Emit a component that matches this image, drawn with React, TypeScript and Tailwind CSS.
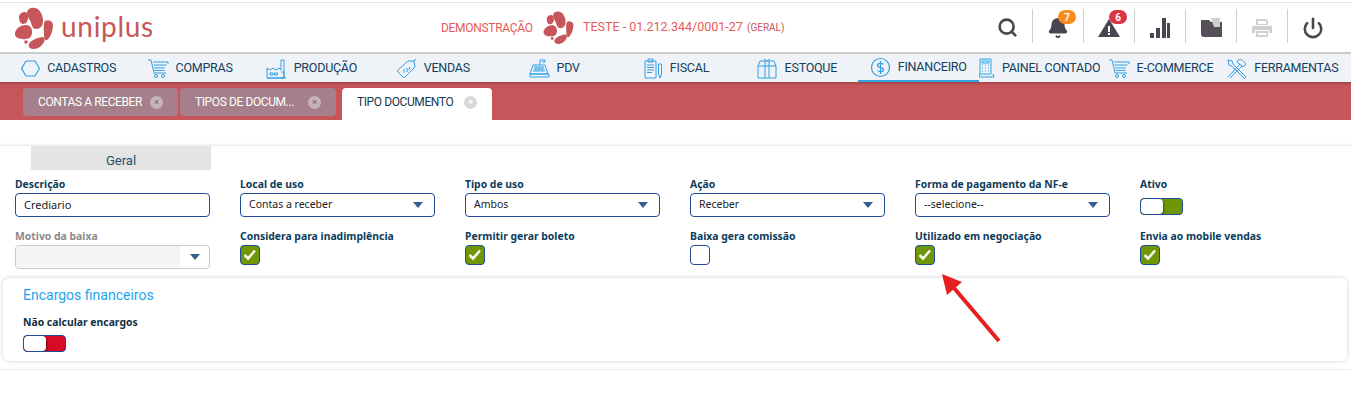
import React from 'react';
import { Search, Bell, Power } from 'lucide-react';

const baseFont = { fontFamily: '"Roboto", sans-serif' };

const Logo = ({ className = '' }: { className?: string }) => (
  <svg viewBox="0 0 38 42" className={className} fill="#c6565a">
    <path d="M12 6c0-4 4-6 8-5 5 1 8 7 8 13 0 5-3 8-7 8-3 0-4-3-5-6-1-4-4-6-4-10z" />
    <path d="M4 10c0-3 3-5 6-5 2 0 3 3 3 6 0 3-2 6-5 6-3 0-4-4-4-7z" />
    <path d="M0 26c1-5 6-8 11-8 4 0 6 3 6 7s-2 7-6 7c-5 1-12-1-11-6z" />
    <path d="M30 14c3-2 7 0 8 3 0 6-2 13-6 16-2 1-3-1-3-5 0-5-1-12 1-14z" />
    <path d="M14 37c2-4 8-6 13-7 3 0 3 3 2 5-2 4-6 7-10 7-4 0-6-2-5-5z" />
    <circle cx="11" cy="35" r="1.800" />
  </svg>
);

const Stroke = ({ children, w = 21, h = 21, vb = '0 0 21 21' }: { children: React.ReactNode; w?: number; h?: number; vb?: string }) => (
  <svg width={w} height={h} viewBox={vb} fill="none" stroke="#2f9fe6" strokeWidth="1" className="shrink-0">
    {children}
  </svg>
);

const icons: Record<string, React.ReactNode> = {
  hex: <Stroke w={19} h={17} vb="0 0 19 17"><path strokeWidth="1.200" d="M5 1h9l4.500 7.500L14 16H5L.6 8.500z" /></Stroke>,
  cart: (
    <Stroke>
      <path d="M0 2h3l3 13h12M5 4h15v2M5.500 7h13M6 10h11M6.500 12.500h10" />
      <circle cx="8" cy="18" r="1.500" />
      <circle cx="15" cy="18" r="1.500" />
    </Stroke>
  ),
  factory: (
    <Stroke>
      <path d="M1 20V10l3 2 3-2 3 2 3-2 2 2V2h3v18zM1 20h19" />
      <path d="M4 15h3v2H4zM8.500 15h3v2h-3zM15 14h3v6h-3" />
    </Stroke>
  ),
  tag: (
    <Stroke>
      <path d="M1 13 12 3h6l1 6L8 20z" />
      <path d="m17 4 3-3M8 11v4M11 10v4M14 9l-1 3" />
    </Stroke>
  ),
  pdv: (
    <Stroke>
      <path d="M1 16 4 7h12l3 9zM1 16h19v3H1zM11 7V2h5v2h-3" />
      <path d="M5 9h10M4.500 11h11M4 13h12M7 9v4M10 9v4M13 9v4" strokeWidth=".9" />
    </Stroke>
  ),
  fiscal: (
    <Stroke>
      <path d="M3 3h11v17H3zM6 1h5v3H6z" />
      <path d="M5 7h7M5 9.500h7M5 12h7M5 14.500h5" />
      <path d="M16.500 6h3v10l-1.500 4-1.500-4z" />
    </Stroke>
  ),
  box: (
    <Stroke>
      <path d="M1 8h18v12H1zM3 3h14l2 5M3 3 1 8M8 3v17M12 3v17" />
      <path d="M7 1l3 2 3-2" />
    </Stroke>
  ),
  money: (
    <Stroke>
      <circle cx="10.500" cy="10.500" r="9" strokeWidth="1.200" />
      <path strokeWidth="1.200" d="M13.500 7.500c-1-1.500-6-2-6 .8 0 3 6 1.500 6 4.400 0 2.800-5 2.300-6 .8M10.500 4v13" />
    </Stroke>
  ),
  calc: (
    <Stroke w={16} h={21} vb="0 0 16 21">
      <path d="M1 1h11v15H1zM1 16l-1 3h15l-1-3" />
      <path d="M3 3h7v2H3zM3 7h1M6 7h1M9 7h1M3 10h1M6 10h1M9 10h1M3 13h1M6 13h1M9 13h1" />
    </Stroke>
  ),
  tools: (
    <Stroke>
      <path d="m2 19 12-13M4 20 16 8M2 2l4 1 1 3 13 13-1.500 1.500L5.500 8 3 7z" />
      <path d="M11 3c2-2 5-2 7 1l2 2-3 3-2-2-3-2z" />
    </Stroke>
  ),
};

const navItems = [
  { label: 'CADASTROS', icon: 'hex' },
  { label: 'COMPRAS', icon: 'cart' },
  { label: 'PRODUÇÃO', icon: 'factory' },
  { label: 'VENDAS', icon: 'tag' },
  { label: 'PDV', icon: 'pdv' },
  { label: 'FISCAL', icon: 'fiscal' },
  { label: 'ESTOQUE', icon: 'box' },
  { label: 'FINANCEIRO', icon: 'money', active: true },
  { label: 'PAINEL CONTADOR', icon: 'calc', start: true },
  { label: 'E-COMMERCE', icon: 'cart' },
  { label: 'FERRAMENTAS', icon: 'tools' },
];

const HeaderCell = ({ children, last }: { children: React.ReactNode; last?: boolean }) => (
  <div className={`h-[34px] pt-[3px] flex items-center justify-center relative ${last ? 'w-[50px]' : 'w-[51px] border-r border-[#cfcfcf]'}`}>
    {children}
  </div>
);

const Count = ({ n, color }: { n: number; color: string }) => (
  <span className={`absolute top-[1px] left-[25px] w-[18px] h-[14px] rounded-full ${color} text-white text-[10px] font-bold flex items-center justify-center`}>
    {n}
  </span>
);

const Tab = ({ label, active, wide }: { label: string; active?: boolean; wide?: number }) => (
  <div
    className={`flex items-center rounded-t-[4px] px-[15px] whitespace-nowrap text-[12px] tracking-[-0.4px] ${
      active ? 'w-[150px] h-[32px] bg-white text-[#17384f] pb-[4px]' : 'h-[28px] rounded-b-[4px] bg-[#a67f8a] text-white'
    } ${wide === 1 ? 'w-[155px]' : ''} ${wide === 2 ? 'w-[156px]' : ''}`}
  >
    <span className="flex-1">{label}</span>
    <span className={`w-[13px] h-[13px] rounded-full flex items-center justify-center text-[9px] leading-none font-bold ${active ? 'bg-[#d9d9d9] text-white' : 'bg-[#c4b4ba] text-[#8d6f79]'}`}>
      ×
    </span>
  </div>
);

const Label = ({ children, muted }: { children: React.ReactNode; muted?: boolean }) => (
  <div className={`h-[16px] text-[10.400px] leading-[16px] font-bold whitespace-nowrap ${muted ? 'text-[#8a8a8a]' : 'text-[#0c3c5c]'}`}>{children}</div>
);

const Arrow = () => (
  <span className="w-0 h-0 border-x-[5.500px] border-x-transparent border-t-[6px] border-t-[#2f5f8f]" />
);

const Select = ({ label, value }: { label: string; value: string }) => (
  <div>
    <Label>{label}</Label>
    <div className="w-[195px] h-[24px] mt-[1px] border border-[#1e4a96] rounded-[4px] flex items-center justify-between pl-[8px] pr-[11px] text-[10.500px] text-[#222]">
      <span>{value}</span>
      <Arrow />
    </div>
  </div>
);

const Check = ({ label, checked = true }: { label: string; checked?: boolean }) => (
  <div>
    <Label>{label}</Label>
    <div className={`w-[20px] h-[20px] mt-[1px] rounded-[4px] border border-[#1e4a96] flex items-center justify-center ${checked ? 'bg-[#6f9605]' : 'bg-white'}`}>
      {checked && (
        <svg width="14" height="12" viewBox="0 0 14 12" fill="none" stroke="#f4f7ec" strokeWidth="2.600">
          <path d="m1.500 6 3.500 3.500 7-8" />
        </svg>
      )}
    </div>
  </div>
);

const Toggle = ({ color }: { color: string }) => (
  <div className={`w-[43px] h-[17px] rounded-[4px] border border-[#1e4a96] ${color} overflow-hidden`}>
    <div className="w-[22px] h-full bg-white rounded-[4px] shadow-[1px_1px_2px_rgba(0,0,0,0.4)]" />
  </div>
);

export default function App() {
  return (
    <div className="w-[1351px] h-[418px] bg-white overflow-hidden relative" style={baseFont}>
      {/* Top bar */}
      <div className="h-[50px] mt-[2px] border-t border-[#e3e3e3] flex items-center pl-[15px] pr-[13px]">
        <Logo className="w-[38px] h-[42px]" />
        <span className="ml-[8px] text-[28px] leading-none text-[#c6565a] tracking-[0.700px] pb-[4px]" style={{ fontFamily: '"Lato", sans-serif' }}>
          uniplus
        </span>
        <div className="absolute left-[441px] top-[11px] flex items-center text-[12.500px] text-[#e85a5a] whitespace-nowrap">
          <span className="w-[102px] text-[12px] tracking-[-0.300px]">DEMONSTRAÇÃO</span>
          <Logo className="w-[31px] h-[33px]" />
          <span className="ml-[9px] w-[164px]">TESTE - 01.212.344/0001-27</span>
          <span className="text-[10px] text-[#c6565a]">(GERAL)</span>
        </div>
        <div className="ml-auto flex items-center mt-[-3px]">
          <HeaderCell><Search size={21} strokeWidth={3} color="#4a4550" /></HeaderCell>
          <HeaderCell>
            <Bell size={22} fill="#4a4550" color="#4a4550" />
            <Count n={7} color="bg-[#f78c1e]" />
          </HeaderCell>
          <HeaderCell>
            <svg width="22" height="19" viewBox="0 0 22 19"><path fill="#4a4550" d="M11 1 22 19H0z" /><path fill="#fff" d="M10 8h2v6h-2zM10 15h2v2h-2z" /></svg>
            <Count n={6} color="bg-[#dc3545]" />
          </HeaderCell>
          <HeaderCell>
            <svg width="20" height="20" viewBox="0 0 20 20" fill="#4a4550"><path d="M0 15h4v5H0zM6 10h4v10H6zM12 0h4v20h-4z" /><path d="M17 5h3v15h-3z" /></svg>
          </HeaderCell>
          <HeaderCell>
            <svg width="21" height="19" viewBox="0 0 21 19"><path fill="#564e59" d="M0 2h8l2 2h11v15H3c-2 0-3-1-3-3z" /><path fill="#cfcfcf" d="M10 0h9v9h-6z" /></svg>
          </HeaderCell>
          <HeaderCell>
            <svg width="20" height="18" viewBox="0 0 20 18" fill="#cfcfcf"><path d="M4 0h10l2 2v4H4zM0 7h20v7h-3v-3H3v3H0zM4 12h12v6H4z" /><path fill="#fff" d="M6 2h8v3H6zM6 14h8v2H6z" /></svg>
          </HeaderCell>
          <HeaderCell last><Power size={22} strokeWidth={2.800} color="#4a4550" /></HeaderCell>
        </div>
      </div>

      {/* Nav */}
      <div className="h-[30px] bg-[#eff3f7] border-t-2 border-[#c6cbce] px-[8px] grid grid-cols-11 text-[12.500px] tracking-[-0.250px] text-[#12405f]">
        {navItems.map((item) => (
          <div
            key={item.label}
            className={`flex items-center gap-[7px] overflow-hidden whitespace-nowrap ${item.start ? 'justify-start' : 'justify-center'} ${item.active ? 'border-b-[2px] border-[#36a3e0]' : ''}`}
          >
            {icons[item.icon]}
            <span>{item.label}</span>
          </div>
        ))}
      </div>

      {/* Tabs */}
      <div className="h-[38px] bg-[#c6565a] flex items-start gap-[2px] pl-[23px] pt-[6px] shadow-[inset_0_3px_3px_-2px_rgba(0,0,0,0.3)]">
        <Tab label="CONTAS A RECEBER" wide={1} />
        <Tab label="TIPOS DE DOCUM..." wide={2} />
        <div className="ml-[4px]"><Tab label="TIPO DOCUMENTO" active /></div>
      </div>

      {/* Form */}
      <div className="mt-[25px] h-[225px] border-y border-[#ececec] shadow-[0_-1px_2px_rgba(0,0,0,0.06)]">
        <div className="ml-[31px] w-[180px] h-[24px] bg-[#e4e4e4] text-[13px] text-[#25506b] text-center leading-[30px]">Geral</div>
        <div className="mt-[6px] px-[15px] grid grid-cols-[repeat(6,225px)] gap-y-[11px]" style={{ fontFamily: '"Noto Sans", sans-serif' }}>
          <div>
            <Label>Descrição</Label>
            <div className="w-[195px] h-[24px] mt-[1px] border border-[#1e4a96] rounded-[4px] flex items-center pl-[8px] text-[11px] text-[#222]">Crediario</div>
          </div>
          <Select label="Local de uso" value="Contas a receber" />
          <Select label="Tipo de uso" value="Ambos" />
          <Select label="Ação" value="Receber" />
          <Select label="Forma de pagamento da NF-e" value="--selecione--" />
          <div>
            <Label>Ativo</Label>
            <div className="mt-[6px]"><Toggle color="bg-[#6f9605]" /></div>
          </div>
          <div>
            <Label muted>Motivo da baixa</Label>
            <div className="w-[195px] h-[24px] mt-[1px] border border-[#c9c9c9] rounded-[4px] flex overflow-hidden">
              <div className="w-[164px] bg-[#f5f5f7]" />
              <div className="flex-1 flex items-center justify-center"><Arrow /></div>
            </div>
          </div>
          <Check label="Considera para inadimplência" />
          <Check label="Permitir gerar boleto" />
          <Check label="Baixa gera comissão" checked={false} />
          <Check label="Utilizado em negociação" />
          <Check label="Envia ao mobile vendas" />
        </div>

        {/* Encargos */}
        <div className="mt-[9px] mx-[3px] w-[1344px] h-[83px] rounded-[6px] shadow-[0_0_4px_rgba(0,0,0,0.2)] pl-[20px] pt-[8px]">
          <div className="text-[14px] text-[#1fa5ee] leading-[18px]">Encargos financeiros</div>
          <div className="mt-[10px] text-[10.400px] leading-[16px] font-bold text-[#12303f]" style={{ fontFamily: '"Noto Sans", sans-serif' }}>Não calcular encargos</div>
          <div className="mt-[5px]"><Toggle color="bg-[#d60b25]" /></div>
        </div>
      </div>

      {/* Annotation arrow */}
      <svg className="absolute left-[940px] top-[272px]" width="66" height="72" viewBox="0 0 66 72">
        <path d="M14 16 59 69" stroke="#e81f1f" strokeWidth="4" />
        <path d="M2 2 22 10 7 23z" fill="#e81f1f" />
      </svg>
    </div>
  );
}
